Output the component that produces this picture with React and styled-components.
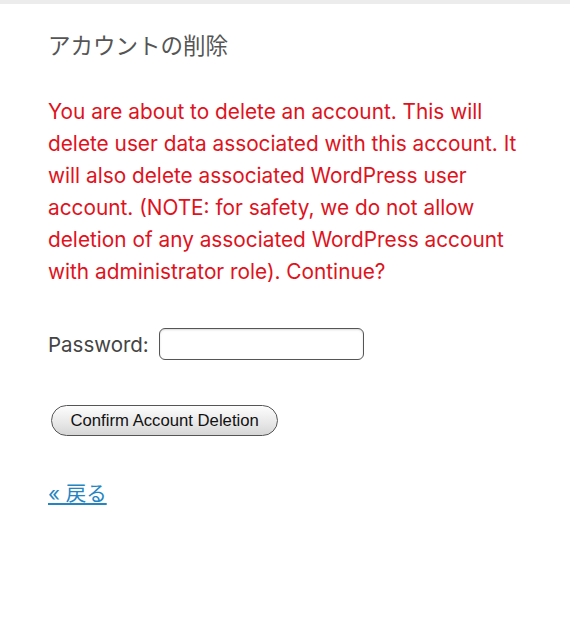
import React from "react";
import styled, { createGlobalStyle } from "styled-components";

const GlobalStyle = createGlobalStyle`
  body {
    margin: 0;
    background: #fff;
    font-family: Inter, "Noto Sans CJK JP", sans-serif;
  }
`;

const Page = styled.div`
  width: 570px;
  min-height: 640px;
  border-top: 4px solid #ececec;
  box-sizing: border-box;
  padding: 26px 48px 0;
`;

const Title = styled.h2`
  margin: 0;
  font-size: 22.5px;
  font-weight: 400;
  line-height: 28px;
  color: #555;
  font-family: "Noto Sans CJK JP", sans-serif;
`;

const Warning = styled.p`
  margin: 38px 0 0;
  font-size: 20.8px;
  line-height: 32px;
  color: #e0121c;
`;

const Line = styled.span`
  display: block;
  white-space: nowrap;
`;

const FieldRow = styled.div`
  margin-top: 40px;
  display: flex;
  align-items: center;
  gap: 10px;
  font-size: 20.5px;
  color: #444;
`;

const PasswordInput = styled.input`
  width: 205px;
  height: 32px;
  box-sizing: border-box;
  border: 1px solid #555;
  border-radius: 6px;
  background: #fff;
  box-shadow: inset 0 1px 2px rgba(0, 0, 0, 0.15);
`;

const Button = styled.button`
  margin: 45px 0 0 3px;
  height: 31px;
  padding: 0 18.5px;
  border: 1px solid #555;
  border-radius: 16px;
  background: linear-gradient(#fdfdfd, #e9e9e9 55%, #d6d6d6);
  font-family: "Liberation Sans", Arial, sans-serif;
  font-size: 16.7px;
  color: #111;
`;

const BackLink = styled.a`
  display: inline-block;
  margin-top: 41px;
  font-size: 20.5px;
  color: #2585c2;
  text-decoration: underline;
  font-family: Inter, "Noto Sans CJK JP", sans-serif;
`;

const lines = [
  "You are about to delete an account. This will",
  "delete user data associated with this account. It",
  "will also delete associated WordPress user",
  "account. (NOTE: for safety, we do not allow",
  "deletion of any associated WordPress account",
  "with administrator role). Continue?",
];

export default function App() {
  return (
    <>
      <GlobalStyle />
      <Page>
        <Title>アカウントの削除</Title>
        <Warning>
          {lines.map((l) => (
            <Line key={l}>{l}</Line>
          ))}
        </Warning>
        <FieldRow>
          <label>Password:</label>
          <PasswordInput type="password" />
        </FieldRow>
        <Button>Confirm Account Deletion</Button>
        <div>
          <BackLink href="#">« 戻る</BackLink>
        </div>
      </Page>
    </>
  );
}
